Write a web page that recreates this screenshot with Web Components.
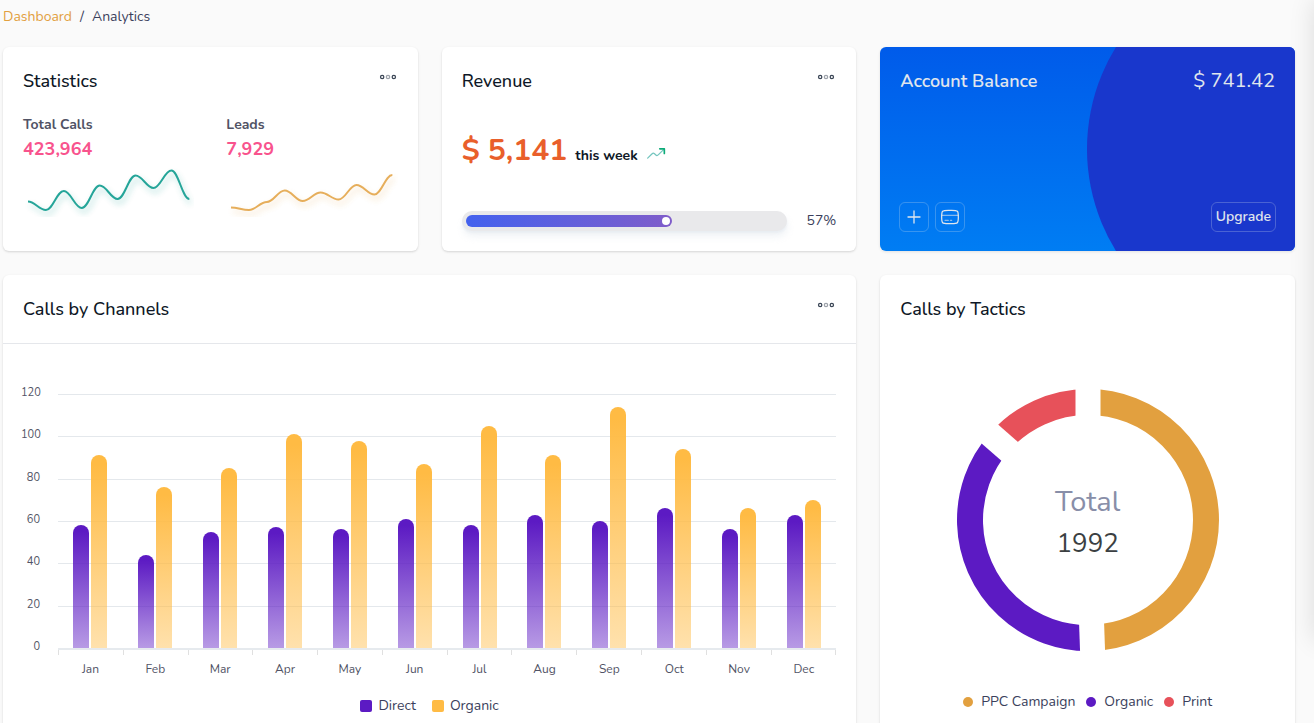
<!DOCTYPE html>
<html lang="en">
<head>
<meta charset="utf-8">
<title>Analytics Dashboard</title>
<style>
  body {
    margin: 0;
    background: #fafafa;
    color: #3b3f5c;
    font: 400 14px/20px Nunito, "Open Sans", sans-serif;
  }
</style>
</head>
<body>

<template id="t-app">
  <style>
    :host { display: flex; flex-direction: column; box-sizing: border-box; min-height: 100vh; padding: 7px 19px 0 3px; overflow: hidden; }
    main { flex: 1; display: grid; grid-template-columns: repeat(3, minmax(0, 1fr)); grid-template-rows: auto 1fr; gap: 24px; margin-top: 20px; }
    calls-chart { grid-column: span 2; }
    .edge { position: fixed; top: 0; left: 100%; width: 400px; height: 640px; box-shadow: 0 0 24px rgba(0, 0, 0, .12); }
  </style>
  <bread-crumb></bread-crumb>
  <main>
    <statistics-card></statistics-card>
    <revenue-card></revenue-card>
    <balance-card></balance-card>
    <calls-chart></calls-chart>
    <tactics-card></tactics-card>
  </main>
  <div class="edge" aria-hidden="true"></div>
</template>

<template id="t-crumb">
  <style>
    :host { display: block; }
    ol { display: flex; gap: 8px; margin: 0; padding: 0; list-style: none; }
    a { color: #e2a03f; text-decoration: none; }
    .here { color: #3b3f5c; }
  </style>
  <nav aria-label="Breadcrumb">
    <ol>
      <li><a href="#dashboard">Dashboard</a></li>
      <li aria-hidden="true">/</li>
      <li class="here" aria-current="page">Analytics</li>
    </ol>
  </nav>
</template>

<template id="t-card">
  <style>
    :host { display: flex; flex-direction: column; flex: 1; background: #fff; border-radius: 6px; box-shadow: 0 1px 3px rgba(0, 0, 0, .1), 0 1px 2px rgba(0, 0, 0, .06); }
    header { display: flex; justify-content: space-between; align-items: flex-start; padding: 20px 20px 0; }
    :host([divided]) header { padding-bottom: 20px; border-bottom: 1px solid #e5e7eb; }
    h2 { margin: 0; font-size: 18px; line-height: 28px; font-weight: 500; color: #0e1726; }
    .body { flex: 1; display: flex; flex-direction: column; padding: 0 20px 20px; }
    :host([divided]) .body { padding: 0; }
  </style>
  <header><h2><slot name="title"></slot></h2><slot name="action"></slot></header>
  <div class="body"><slot></slot></div>
</template>

<template id="t-more">
  <style>
    :host { display: block; }
    button { display: block; padding: 0; border: 0; background: none; color: #3b4656; cursor: pointer; }
    svg { display: block; width: 20px; height: 20px; }
  </style>
  <button type="button" aria-label="More options">
    <svg viewBox="0 0 24 24" fill="none" stroke="currentColor" stroke-width="1.5">
      <circle cx="5" cy="12" r="2"/><circle cx="12" cy="12" r="2" opacity=".5"/><circle cx="19" cy="12" r="2"/>
    </svg>
  </button>
</template>

<template id="t-stat">
  <style>
    :host { display: flex; flex: 1; }
    .stats { flex: 1; display: grid; grid-template-columns: repeat(2, minmax(0, 1fr)); gap: 32px; padding-top: 20px; }
  </style>
  <ui-card>
    <span slot="title">Statistics</span>
    <more-button slot="action"></more-button>
    <div class="stats">
      <spark-stat label="Total Calls" value="423,964" color="#009688" points="38.5,47,28,45,22.5,36,12.5,25,7.5,36"></spark-stat>
      <spark-stat label="Leads" value="7,929" color="#e2a03f" points="44.5,47,39,27.5,38,29.5,36.5,22,31.5,12"></spark-stat>
    </div>
  </ui-card>
</template>

<template id="t-spark">
  <style>
    :host { display: block; }
    .label { font-weight: 700; color: #515365; }
    .value { font-size: 18px; line-height: 28px; font-weight: 700; color: #f8538d; }
    svg { display: block; width: 100%; height: 54px; margin-bottom: 14px; }
    path { fill: none; stroke-width: 2; opacity: .85; }
  </style>
  <div class="label"></div>
  <div class="value"></div>
  <svg viewBox="0 0 172 54" preserveAspectRatio="none" aria-hidden="true"><path/></svg>
</template>

<template id="t-revenue">
  <style>
    :host { display: flex; flex: 1; }
    .amount { flex: 1; display: flex; align-items: center; }
    .line { display: flex; align-items: baseline; gap: 8px; line-height: 40px; }
    .sum { font-size: 30px; font-weight: 700; color: #e95f2b; }
    .period { font-weight: 700; color: #0e1726; }
    svg { width: 20px; height: 20px; align-self: center; }
    .meter { display: flex; align-items: center; gap: 20px; }
    .track { flex: 1; box-sizing: border-box; height: 20px; padding: 4px; border-radius: 10px; background: #e9e9eb; box-shadow: 0 2px 2px rgba(224, 230, 237, .46), 1px 6px 7px rgba(224, 230, 237, .46); }
    .fill { display: flex; align-items: center; justify-content: flex-end; box-sizing: border-box; width: 65%; height: 12px; padding-right: 2px; border-radius: 6px; background: linear-gradient(90deg, #4361ee, #805dca); }
    .fill::after { content: ""; width: 8px; height: 8px; border-radius: 50%; background: #fff; }
  </style>
  <ui-card>
    <span slot="title">Revenue</span>
    <more-button slot="action"></more-button>
    <div class="amount">
      <div class="line">
        <span class="sum">$ 5,141</span>
        <span class="period">this week</span>
        <svg viewBox="0 0 24 24" fill="none" stroke="#009688" stroke-width="1.5" stroke-linecap="round" stroke-linejoin="round" aria-hidden="true">
          <path opacity=".55" d="M22 7l-6.700 6.700c-1 1-1.500 1.500-2.100 1.500s-1.100-.5-2-1.400l-.4-.4c-1-.9-1.400-1.400-2-1.400s-1.100.5-2.100 1.500L2 18.200"/>
          <path stroke="#0cab78" stroke-width="2" d="M22 12.500V7h-5.500"/>
        </svg>
      </div>
    </div>
    <div class="meter">
      <div class="track" role="progressbar" aria-label="Revenue target" aria-valuenow="57" aria-valuemin="0" aria-valuemax="100"><div class="fill"></div></div>
      <span>57%</span>
    </div>
  </ui-card>
</template>

<template id="t-balance">
  <style>
    :host { position: relative; display: flex; flex-direction: column; justify-content: space-between; overflow: hidden; border-radius: 6px; color: #e0e6ed; background: linear-gradient(#005bea, #007df3); box-shadow: 0 1px 3px rgba(0, 0, 0, .1); }
    .disc { position: absolute; top: 50%; right: -180px; width: 388px; height: 388px; margin-top: -194px; border-radius: 50%; background: #1937cc; }
    header, footer { position: relative; display: flex; justify-content: space-between; align-items: center; }
    header { padding: 20px 20px 0; line-height: 28px; }
    h2 { margin: 0; font-size: 18px; line-height: 28px; font-weight: 600; }
    .sum { font-size: 20px; }
    footer { padding: 0 19px 19px; }
    .tools { display: flex; gap: 6px; }
    button { display: grid; place-items: center; box-sizing: border-box; height: 30px; padding: 0 4px; border: 1px solid rgba(224, 230, 237, .25); border-radius: 6px; background: none; color: inherit; font: 600 14px/20px Nunito, "Open Sans", sans-serif; cursor: pointer; }
    svg { display: block; width: 20px; height: 20px; }
  </style>
  <div class="disc"></div>
  <header><h2>Account Balance</h2><span class="sum">$ 741.42</span></header>
  <footer>
    <div class="tools">
      <button type="button" aria-label="Add funds">
        <svg viewBox="0 0 20 20" fill="none" stroke="currentColor" stroke-linecap="round" stroke-width="1.300"><path d="M10 4v12M4 10h12"/></svg>
      </button>
      <button type="button" aria-label="Cards">
        <svg viewBox="0 0 24 24" fill="none" stroke="currentColor" stroke-linecap="round" stroke-width="1.500">
          <path d="M2 12c0-3.770 0-5.660 1.170-6.830S6.230 4 10 4h4c3.770 0 5.660 0 6.830 1.170S22 8.230 22 12s0 5.660-1.170 6.830S17.770 20 14 20h-4c-3.770 0-5.660 0-6.830-1.170S2 15.770 2 12z"/>
          <path opacity=".6" d="M10 16H6M14 16h-1.500M2 10h20"/>
        </svg>
      </button>
    </div>
    <button type="button">Upgrade</button>
  </footer>
</template>

<template id="t-chart">
  <style>
    :host { display: flex; }
    .chart { display: grid; grid-template-columns: 19px minmax(0, 1fr); column-gap: 18px; padding: 50px 20px 0 18px; }
    .scale { display: flex; flex-direction: column; justify-content: space-between; margin: -9px 0 -5px; font-size: 11px; line-height: 16px; text-align: right; color: #515365; }
    .plot { position: relative; height: 254px; display: grid; grid-template-columns: repeat(12, 1fr); border-bottom: 2px solid #e6eaee; }
    .lines { position: absolute; inset: 0; display: grid; grid-template-rows: repeat(6, 1fr); }
    .lines i { border-top: 1px solid #e4e8ec; }
    .slot { position: relative; display: flex; justify-content: center; align-items: flex-end; gap: 2px; }
    .bar { width: 16px; border-radius: 8px 8px 0 0; }
    .direct { background: linear-gradient(rgba(92, 26, 195, 1) 5%, rgba(92, 26, 195, .44)); }
    .organic { background: linear-gradient(rgba(255, 187, 68, 1) 5%, rgba(255, 187, 68, .44)); }
    .ticks, .months { grid-column: 2; display: grid; grid-template-columns: repeat(12, 1fr); }
    .ticks { height: 5px; border-right: 1px solid #e0e0e0; }
    .ticks i { border-left: 1px solid #e0e0e0; }
    .months { margin-top: 6px; font-size: 12px; line-height: 16px; text-align: center; color: #515365; }
    .legend { display: flex; justify-content: center; gap: 16px; margin-top: 19px; }
    .legend span { display: flex; align-items: center; gap: 6px; }
    .legend span::before { content: ""; width: 12px; height: 12px; border-radius: 2px; background: var(--key); }
  </style>
  <ui-card divided>
    <span slot="title">Calls by Channels</span>
    <more-button slot="action"></more-button>
    <div class="chart">
      <div class="scale"></div>
      <div class="plot"><div class="lines"><i></i><i></i><i></i><i></i><i></i><i></i></div></div>
      <div class="ticks"></div>
      <div class="months"></div>
    </div>
    <div class="legend">
      <span style="--key:#5c1ac3">Direct</span>
      <span style="--key:#ffbb44">Organic</span>
    </div>
  </ui-card>
</template>

<template id="t-tactics">
  <style>
    :host { display: flex; }
    .donut { display: grid; place-items: center; margin-top: 53px; }
    .donut > * { grid-area: 1 / 1; }
    svg { display: block; width: 288px; max-width: 100%; }
    circle { fill: none; stroke-width: 26; }
    .gap { stroke: #fff; stroke-width: 25; }
    .total { padding-top: 6px; text-align: center; line-height: 42px; font-size: 26px; color: #3b3f42; }
    .total div { font-size: 29px; color: #888ea8; }
    .legend { display: flex; justify-content: center; gap: 11px; margin-top: 28px; }
    .legend span { display: flex; align-items: center; gap: 8px; }
    .legend span::before { content: ""; width: 10px; height: 10px; border-radius: 50%; background: var(--key); }
  </style>
  <ui-card>
    <span slot="title">Calls by Tactics</span>
    <div class="donut">
      <svg viewBox="-144 -144 288 288" aria-hidden="true"></svg>
      <div class="total"><div>Total</div>1992</div>
    </div>
    <div class="legend">
      <span style="--key:#e2a03f">PPC Campaign</span>
      <span style="--key:#5c1ac3">Organic</span>
      <span style="--key:#e7515a">Print</span>
    </div>
  </ui-card>
</template>

<script>
  function define(name, templateId, setup) {
    customElements.define(name, class extends HTMLElement {
      connectedCallback() {
        if (this.shadowRoot) return;
        const root = this.attachShadow({ mode: 'open' });
        root.append(document.getElementById(templateId).content.cloneNode(true));
        if (setup) setup(root, this);
      }
    });
  }

  define('ui-card', 't-card');
  define('more-button', 't-more');
  define('bread-crumb', 't-crumb');

  define('spark-stat', 't-spark', (root, host) => {
    root.querySelector('.label').textContent = host.getAttribute('label');
    root.querySelector('.value').textContent = host.getAttribute('value');
    const color = host.getAttribute('color');
    const ys = host.getAttribute('points').split(',').map(Number);
    const step = 18, pull = 7;
    let d = '';
    ys.forEach((y, i) => {
      const x = 5 + i * step;
      d += i ? ` C${x - step + pull} ${ys[i - 1]} ${x - pull} ${y} ${x} ${y}` : `M${x} ${y}`;
    });
    const path = root.querySelector('path');
    path.setAttribute('d', d);
    path.setAttribute('stroke', color);
    path.style.filter = `drop-shadow(2px 4px 3px ${color}66)`;
  });

  define('statistics-card', 't-stat');
  define('revenue-card', 't-revenue');
  define('balance-card', 't-balance');

  define('calls-chart', 't-chart', root => {
    const months = ['Jan', 'Feb', 'Mar', 'Apr', 'May', 'Jun', 'Jul', 'Aug', 'Sep', 'Oct', 'Nov', 'Dec'];
    const direct = [58, 44, 55, 57, 56, 61, 58, 63, 60, 66, 56, 63];
    const organic = [91, 76, 85, 101, 98, 87, 105, 91, 114, 94, 66, 70];
    const max = 120;
    const fill = (sel, html) => root.querySelector(sel).insertAdjacentHTML('beforeend', html);
    fill('.scale', [120, 100, 80, 60, 40, 20, 0].map(v => `<span>${v}</span>`).join(''));
    fill('.plot', months.map((m, i) => `<div class="slot">
      <div class="bar direct" style="height:${direct[i] / max * 100}%"></div>
      <div class="bar organic" style="height:${organic[i] / max * 100}%"></div></div>`).join(''));
    fill('.ticks', months.map(() => '<i></i>').join(''));
    fill('.months', months.map(m => `<span>${m}</span>`).join(''));
  });

  define('tactics-card', 't-tactics', root => {
    const slices = [[985, '#e2a03f'], [737, '#5c1ac3'], [270, '#e7515a']];
    const total = 1992;
    let start = 0, rings = '', gaps = '';
    for (const [value, color] of slices) {
      const turn = start / total * 360;
      rings += `<circle r="118" pathLength="${total}" stroke="${color}" stroke-dasharray="${value} ${total}" transform="rotate(${turn - 90})"/>`;
      gaps += `<path class="gap" d="M0 -90V-140" transform="rotate(${turn})"/>`;
      start += value;
    }
    root.querySelector('svg').innerHTML = rings + gaps;
  });

  define('analytics-app', 't-app');
</script>
<analytics-app></analytics-app>
</body>
</html>
